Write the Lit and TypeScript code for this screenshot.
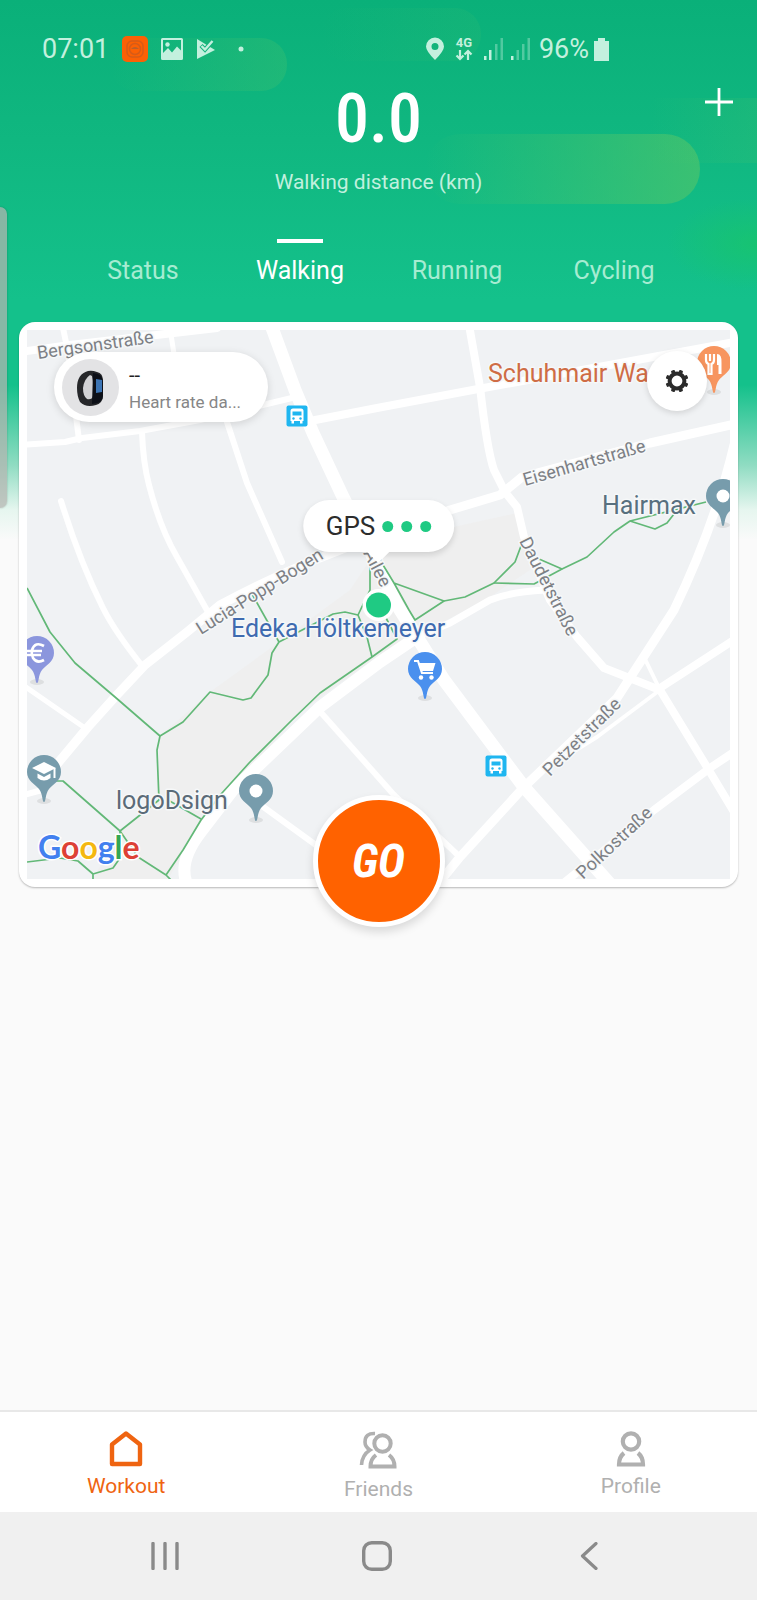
import { LitElement, html, svg, css } from "lit";
import { customElement, state } from "lit/decorators.js";
import { classMap } from "lit/directives/class-map.js";

const TABS = ["Status", "Walking", "Running", "Cycling"];

/* Streets of the map: path and stroke width. */
const ROADS: [string, number][] = [
  ["M20 352 L70 345 L217 328", 8],
  ["M63 328 L68 352 L79 440", 6],
  ["M170 328 L174 354", 5],
  ["M20 445 L65 442 L82 438 L140 431 L200 420 L296 397", 6],
  ["M305 422 L377 408 L478 389 L517 382 L740 341", 8],
  ["M271 325 L295 390 L313 433 L343 497 L377 565 L397 605 L417 637 L444 680 L524 787 L610 884", 13],
  ["M142 432 Q143 462 149 485 Q160 528 177 557 L208 612", 6],
  ["M227 422 L247 483 L282 562", 6],
  ["M61 501 Q80 562 103 608 Q115 632 143 667", 6],
  ["M58 763 L88 727 L115 697 L145 665 L187 632 L220 605 Q300 562 377 537 L450 510 L500 495 L522 477 L650 443 L740 423", 9],
  ["M20 796 L42 790 L60 760", 6],
  ["M20 683 L85 728", 5],
  ["M469 325 L480 387 Q487 450 494 470 L505 492 L517 507 L524 537 L550 600 L577 637 L604 668 L660 690", 8],
  ["M734 445 Q715 525 674 610 L617 698 L524 787 L460 857 L438 884", 9],
  ["M734 640 L660 688", 8],
  ["M660 690 L597 737 L560 760", 4],
  ["M644 657 L660 690", 4],
  ["M660 690 L710 772 L734 812", 8],
  ["M734 752 L710 768 L654 810 L560 886", 8],
  ["M317 708 L394 795 L460 857", 6],
  ["M258 803 L320 848", 6],
  ["M187 884 Q178 862 200 833 L233 790 L320 707 L380 662 L417 637", 12],
  ["M417 637 L450 623 L490 600 Q510 592 545 590", 7],
];

const PATHS = [
  "M27 588 L50 632 L75 663 L115 697 L160 736 L183 722 L210 692 L243 700 L251 698 L268 675 L272 653 L279 642 L333 614 L345 612 L358 615",
  "M252 594 L279 642",
  "M160 736 L157 750 L159 800 L120 831 L63 781 L55 781",
  "M168 800 L201 819",
  "M166 875 L183 850 L201 820 L222 793 L250 762 L292 720 L320 693 L372 657 L397 639 L385 616",
  "M372 657 L367 637 L358 615 L370 590 V560",
  "M120 831 L120 858 L113 868 L93 874 L93 880",
  "M27 862 L60 858 L78 861 L93 874",
  "M120 831 L138 857 L166 875 L172 881",
  "M380 560 L394 583 L409 610 L415 620 L444 601 L394 583",
  "M444 601 L465 597 L494 583 L515 562 L521 546",
  "M494 583 L534 584 L562 569 L539 559",
  "M562 569 L587 557 L614 532 L630 521 L706 502",
  "M630 521 L655 529 L667 523 L674 514",
];

/* Names along the streets: text, start, angle. */
const STREETS: [string, number, number, number][] = [
  ["Bergsonstraße", 38, 359, -8],
  ["Eisenhartstraße", 525, 486, -16],
  ["Lucia-Popp-Bogen", 201, 635, -32],
  ["Daudetstraße", 519, 541, 63],
  ["Petzetstraße", 550, 777, -45],
  ["Polkostraße", 583, 880, -43],
  ["Allee", 363, 553, 63],
];

const PLACES: [string, number, number, string][] = [
  ["Schuhmair Wa", 488, 382, "#cf6c45"],
  ["Hairmax", 602, 514, "#58707f"],
  ["Edeka Höltkemeyer", 231, 637, "#3f6bb0"],
  ["logoDsign", 116, 809, "#5b6b78"],
];

const glyphFood = svg`<path d="M-8 -9 V-3 Q-8 0 -5.500 1 V11 H-2.500 V1 Q0 0 0 -3 V-9 M-4 -9 V-2" fill="none" stroke="#fff" stroke-width="2.200"/><path d="M3 -9 Q8 -9 7.500 0 V11 H4.500 V2 H3 Z" fill="#fff"/>`;
const glyphDot = svg`<circle r="6.500" fill="#fff"/>`;
const glyphEuro = svg`<path d="M7 -7 Q-2 -12 -5 -3 Q-6 1 -4 5 Q0 11 7 7 M-10 -2 H5 M-10 2 H4" fill="none" stroke="#fff" stroke-width="2.600"/>`;
const glyphCap = svg`<path d="M-12 -4 L0 -10 L12 -4 L0 2 Z M-6.500 1.500 L0 5 L6.500 1.500 V6 Q0 11 -6.500 6 Z" fill="#fff"/><path d="M10.500 -4 V6" stroke="#fff" stroke-width="2"/>`;
const glyphCart = svg`<path d="M-11 -8 H-7 L-3 4 H8" fill="none" stroke="#fff" stroke-width="2.200"/><path d="M-7 -6 H10.500 L8 2 H-4 Z" fill="#fff"/><circle cx="-4" cy="8.500" r="2.200" fill="#fff"/><circle cx="6.500" cy="8.500" r="2.200" fill="#fff"/>`;

const PINS: [number, number, string, unknown][] = [
  [714, 363, "#f7955f", glyphFood],
  [723, 496, "#779cac", glyphDot],
  [37, 653, "#8b96dd", glyphEuro],
  [44, 772, "#779cac", glyphCap],
  [256, 791, "#779cac", glyphDot],
  [425, 669, "#4a90ee", glyphCart],
];

const pin = (x: number, y: number, color: string, glyph: unknown) => svg`
  <g transform="translate(${x} ${y})">
    <ellipse cy="29" rx="7" ry="3" fill="#000" opacity=".08"/>
    <path d="M0 30 C-2 30 -1 22 -5 17 C-9 12 -17 9 -17 0 A17 17 0 1 1 17 0 C17 9 9 12 5 17 C1 22 2 30 0 30 Z" fill=${color}/>
    ${glyph}
  </g>`;

const busStop = (x: number, y: number) => svg`
  <g transform="translate(${x} ${y})">
    <rect x="-10.500" y="-10.500" width="21" height="21" rx="2" fill="#1fb6f0"/>
    <path d="M-6.500 -5 Q-6.500 -7.500 -4 -7.500 H4 Q6.500 -7.500 6.500 -5 V5 H5.500 V7.500 H3 V5 H-3 V7.500 H-5.500 V5 H-6.500 Z" fill="#fff"/>
    <path d="M-4.500 -4.500 H4.500 V-.5 H-4.500 Z" fill="#1fb6f0"/>
    <circle cx="-3.500" cy="2.500" r="1.200" fill="#1fb6f0"/><circle cx="3.500" cy="2.500" r="1.200" fill="#1fb6f0"/>
  </g>`;

@customElement("walk-map")
class WalkMap extends LitElement {
  static styles = css`
    :host { display: block; }
    .map { display: block; width: 100%; height: auto; background: #f0f2f4; }
    .road { fill: none; stroke: #fff; stroke-linecap: round; stroke-linejoin: round; }
    .trail { fill: none; stroke: #62b877; stroke-width: 1.7px; stroke-linejoin: round; }
    .label { font-family: Roboto, sans-serif; paint-order: stroke; stroke: #f6f8f9; stroke-width: 3px; stroke-linejoin: round; }
    .street { fill: #7d8085; font-size: 18px; }
    .place { font-size: 25px; }
    .brand { font-family: Lato, sans-serif; font-size: 32px; font-weight: 700; paint-order: stroke; stroke: #fff; stroke-width: 3px; }
    .blue { fill: #4280ef; }
    .red { fill: #dd4136; }
    .yellow { fill: #f4b811; }
    .green { fill: #34a655; }
  `;

  render() {
    return html`
      <svg class="map" viewBox="27 330 703 549" role="img" aria-label="Map of your surroundings">
        <path d="M160 736 L210 692 L279 642 L350 590 L380 545 L440 530 L521 512 L530 570 L490 597 L415 637 L372 660 L300 712 L201 825 L168 879 H93 L120 831 L157 800 Z" fill="#efefef"/>
        ${ROADS.map(([d, w]) => svg`<path class="road" d=${d} stroke-width=${w}/>`)}
        ${PATHS.map((d) => svg`<path class="trail" d=${d}/>`)}
        ${STREETS.map(
          ([name, x, y, a]) =>
            svg`<text class="label street" transform="translate(${x} ${y}) rotate(${a})">${name}</text>`
        )}
        ${PLACES.map(([name, x, y, c]) => svg`<text class="label place" x=${x} y=${y} fill=${c}>${name}</text>`)}
        ${PINS.map(([x, y, c, g]) => pin(x, y, c, g))}
        ${busStop(297, 416)}${busStop(496, 766)}
        <text class="brand" x="38" y="859"><tspan class="blue">G</tspan><tspan class="red">o</tspan><tspan class="yellow">o</tspan><tspan class="blue">g</tspan><tspan class="green">l</tspan><tspan class="red">e</tspan></text>
        <circle cx="378.500" cy="605" r="16" fill="#fff"/>
        <circle cx="378.500" cy="605" r="12.500" fill="#1fca83"/>
      </svg>`;
  }
}

@customElement("app-root")
class AppRoot extends LitElement {
  @state() private tab = "Walking";

  static styles = css`
    :host {
      display: flex;
      flex-direction: column;
      min-height: 100vh;
      position: relative;
      overflow: hidden;
      box-sizing: border-box;
      font-family: Roboto, sans-serif;
      background: linear-gradient(#0ab079 0, #10b780 140px, #14c18b 300px, #14c18b 385px, #8fdcc2 465px, #e6f6ef 510px, #fafafa 540px) #fafafa;
    }
    button { font: inherit; color: inherit; background: none; border: 0; padding: 0; margin: 0; cursor: pointer; }
    svg { display: block; }
    .decor { position: absolute; top: 0; left: 0; width: 100%; height: 330px; }
    .edge { position: absolute; left: 0; top: 207px; width: 7px; height: 301px; border-radius: 0 8px 8px 0; background: #b4b4b0b8; box-shadow: 0 0 2px #0004; }
    header { position: relative; }

    .status { display: flex; justify-content: space-between; align-items: center; height: 72px; padding: 26px 148px 0 42px; box-sizing: border-box; color: #c3f0de; font-size: 27px; line-height: 32px; }
    .cluster { display: flex; align-items: center; }
    .left { gap: 13px; }
    .right { gap: 9px; }
    .power { display: flex; align-items: center; gap: 5px; }

    .summary { display: grid; grid-template-columns: 1fr auto 1fr; color: #fff; }
    .total { grid-column: 2; display: flex; flex-direction: column; align-items: center; }
    .value { font-family: "Liberation Sans Narrow", "Roboto Condensed", Roboto, sans-serif; font-size: 68px; line-height: 94px; font-weight: 500; }
    .caption { font-size: 21px; line-height: 32px; color: #c0f0de; }
    .add { justify-self: end; align-self: start; margin: 16px 24px 0 0; }

    .tabs { display: grid; grid-template-columns: repeat(4, 1fr); width: 83%; margin: 41px auto 0; }
    .tab { display: flex; flex-direction: column; align-items: center; gap: 12px; font-size: 25px; line-height: 32px; color: #a6ecd2; }
    .tab::before { content: ""; width: 46px; height: 4px; }
    .tab.on { color: #fff; }
    .tab.on::before { background: #fff; }

    main { flex: 1; position: relative; padding: 35px 19px 60px; }
    .card { position: relative; padding: 8px; border-radius: 16px; background: #fff; box-shadow: 0 1px 2px #0004; }

    .device { position: absolute; top: 30px; left: 35px; display: flex; align-items: center; gap: 10px; box-sizing: border-box; width: 214px; height: 70px; padding: 0 16px 0 8px; border-radius: 35px; background: #fff; box-shadow: 0 2px 8px #0002; text-align: left; }
    .device .text { display: flex; flex-direction: column; padding-top: 4px; white-space: nowrap; }
    .device .rate { font-size: 20px; line-height: 26px; color: #222; }
    .device .note { font-size: 17px; line-height: 28px; color: #868686; }
    .settings { position: absolute; top: 29px; right: 31px; display: grid; place-items: center; width: 60px; height: 60px; border-radius: 50%; background: #fff; box-shadow: 0 2px 6px #0002; }

    .gps { position: absolute; top: 178px; left: 50%; transform: translateX(-50%); display: flex; align-items: center; gap: 7px; height: 52px; padding: 0 23px; border-radius: 26px; background: #fff; box-shadow: 0 3px 6px #0002; font-size: 26px; color: #2c2c2c; }
    .gps::after { content: ""; position: absolute; top: 51px; left: 50%; margin-left: -12px; border: 12px solid transparent; border-top-color: #fff; border-bottom: 0; }
    .dots { display: flex; gap: 8px; }
    .dot { width: 11px; height: 11px; border-radius: 50%; background: #1fca83; }

    .go { position: absolute; left: 50%; bottom: -40px; transform: translateX(-50%); box-sizing: border-box; width: 132px; height: 132px; border: 5px solid #fff; border-radius: 50%; background: #ff6200; box-shadow: 0 5px 10px #0002; color: #fff; font-family: "Liberation Sans Narrow", "Roboto Condensed", Roboto, sans-serif; font-size: 46px; font-weight: 700; font-style: italic; }

    .nav { display: grid; grid-template-columns: repeat(3, 1fr); height: 102px; border-top: 2px solid #e8e8e8; background: #fff; box-sizing: border-box; }
    .link { display: flex; flex-direction: column; align-items: center; gap: 5px; padding-top: 19px; font-size: 21px; line-height: 28px; color: #b0b0b0; text-decoration: none; }
    .link.on { color: #ef6411; }
    .system { display: grid; grid-template-columns: repeat(3, 212px); justify-content: center; height: 88px; padding-right: 4px; background: #f0f0f0; color: #8a8a8a; }
    .system button { display: grid; place-items: center; }
  `;

  private renderStatus() {
    return html`
      <div class="status">
        <div class="cluster left">
          <span>07:01</span>
          <svg width="26" height="26" viewBox="0 0 26 26"><rect width="26" height="26" rx="5" fill="#fb6105"/><g fill="none" stroke="#d65c18" stroke-width="1.500"><rect x="5" y="5" width="16" height="16" rx="5"/><circle cx="13" cy="13" r="5.500"/></g><path d="M9 13 Q13 9 17 13 Z" fill="#b8602c"/></svg>
          <svg width="22" height="22" viewBox="0 0 22 22"><path fill="currentColor" fill-rule="evenodd" d="M0 1.500 Q0 0 1.500 0 H20.500 Q22 0 22 1.500 V20.500 Q22 22 20.500 22 H1.500 Q0 22 0 20.500 Z M2 2 V15 L7 10 L11 14.500 L16 8.500 L20 12.500 V2 Z"/><circle cx="6.500" cy="6.500" r="2.200" fill="currentColor"/></svg>
          <svg width="20" height="22" viewBox="0 0 20 22"><path d="M1 1 L19 12 L1 21 Z" fill="currentColor"/><path d="M5 7.500 L9 11.500 L17.500 2" fill="none" stroke="#14b37c" stroke-width="4.400"/><path d="M5.500 8 L9 11.500 L16.500 3" fill="none" stroke="currentColor" stroke-width="2.400"/></svg>
          <svg width="30" height="6" viewBox="0 0 30 6"><circle cx="12" cy="3" r="2.500" fill="currentColor"/></svg>
        </div>
        <div class="cluster right">
          <svg width="20" height="24" viewBox="0 0 20 24"><path fill="currentColor" fill-rule="evenodd" d="M10 23 Q1 14 1 9.500 A9 9 0 0 1 19 9.500 Q19 14 10 23 Z M10 6 A3.500 3.500 0 1 0 10 13 A3.500 3.500 0 1 0 10 6 Z"/></svg>
          <svg width="20" height="32" viewBox="0 -4 20 32"><text x="10" y="10" text-anchor="middle" font-size="13" font-weight="700" fill="currentColor">4G</text><path d="M6 13 V22 M2.500 18.500 L6 22 L9.500 18.500 M14 23 V14 M10.500 17.500 L14 14 L17.500 17.500" fill="none" stroke="currentColor" stroke-width="2.200"/></svg>
          <svg width="47" height="22" viewBox="0 0 47 22"><g fill="currentColor"><path d="M1 18h2.500v4H1z M6 12h2.500v10H6z M28 18h2.500v4H28z"/><path opacity=".38" d="M12 6h2.500v16H12z M17.500 0h2.500v22h-2.500z M33.500 12h2.500v10h-2.500z M39 6h2.500v16H39z M44.500 0H47v22h-2.500z"/></g></svg>
          <span class="power">96%<svg width="15" height="23" viewBox="0 0 15 23"><path d="M4 0 H11 V3 H15 V23 H0 V3 H4 Z" fill="currentColor"/></svg></span>
        </div>
      </div>`;
  }

  private renderDevice() {
    return html`
      <button class="device">
        <svg width="57" height="57" viewBox="0 0 57 57">
          <circle cx="28.500" cy="28.500" r="28.500" fill="#e3e3e5"/>
          <path d="M26 12 Q15 15 15 29 Q15 37 18 43 Q24 49 34 46 Q41 44 41 36 V22 Q41 14 35 13 Q30 11 26 12 Z" fill="#26272a"/>
          <path d="M28 16 Q22 20 21 29 Q21 37 25 40 Q30 41 31 37 Q32 25 30 17 Z" fill="#d2d2d5"/>
          <path d="M31 14 Q41 14 41 24 V37 Q41 44 30 45 Z" fill="#0d1018"/>
          <path d="M34 20 L40 21 V33 L34 34 Z" fill="#3c74b4"/>
        </svg>
        <span class="text"><span class="rate">--</span><span class="note">Heart rate da...</span></span>
      </button>`;
  }

  render() {
    return html`
      <svg class="decor" viewBox="0 0 757 330" preserveAspectRatio="none" aria-hidden="true">
        <defs>
          <linearGradient id="a"><stop offset="0" stop-color="#4cc46c" stop-opacity="0"/><stop offset="1" stop-color="#4cc46c" stop-opacity=".7"/></linearGradient>
          <radialGradient id="b"><stop offset="0" stop-color="#1ac764" stop-opacity=".6"/><stop offset="1" stop-color="#1ac764" stop-opacity="0"/></radialGradient>
        </defs>
        <rect x="425" y="134" width="275" height="70" rx="35" fill="url(#a)"/>
        <rect x="110" y="38" width="177" height="53" rx="26" fill="url(#a)" opacity=".4"/>
        <rect x="320" y="8" width="161" height="53" rx="26" fill="url(#a)" opacity=".18"/>
        <rect x="650" y="98" width="200" height="65" fill="url(#a)" opacity=".5"/>
        <ellipse cx="757" cy="244" rx="90" ry="46" fill="url(#b)"/>
      </svg>
      <header>
        ${this.renderStatus()}
        <div class="summary">
          <div class="total"><span class="value">0.0</span><span class="caption">Walking distance (km)</span></div>
          <button class="add" aria-label="Add"><svg width="28" height="28" viewBox="0 0 28 28"><path d="M14 0 V28 M0 14 H28" stroke="#fff" stroke-width="2.800"/></svg></button>
        </div>
        <nav class="tabs">
          ${TABS.map(
            (t) => html`<button class=${classMap({ tab: true, on: t === this.tab })} @click=${() => (this.tab = t)}>${t}</button>`
          )}
        </nav>
      </header>
      <main>
        <section class="card">
          <walk-map></walk-map>
          ${this.renderDevice()}
          <button class="settings" aria-label="Settings">
            <svg width="24" height="24" viewBox="-12 -12 24 24">
              <circle r="7.400" fill="none" stroke="#2b2b2b" stroke-width="4"/>
              ${[22.5, 67.5, 112.5, 157.5, 202.5, 247.5, 292.5, 337.5].map((a) => svg`<rect x="-2" y="-11.500" width="4" height="4" rx="1" fill="#2b2b2b" transform="rotate(${a})"/>`)}
            </svg>
          </button>
          <div class="gps">GPS<span class="dots"><span class="dot"></span><span class="dot"></span><span class="dot"></span></span></div>
          <button class="go">GO</button>
        </section>
      </main>
      <nav class="nav">
        <a class="link on" href="#workout">
          <svg width="34" height="36" viewBox="0 0 34 36"><path d="M3 33 V13.500 L17 2.500 L31 13.500 V33 Z" fill="none" stroke="currentColor" stroke-width="4.400" stroke-linejoin="round"/></svg>
          Workout
        </a>
        <a class="link" href="#friends">
          <svg width="38" height="39" viewBox="0 0 38 39"><g fill="none" stroke="currentColor" stroke-width="4"><circle cx="23.500" cy="12.500" r="8.200"/><path d="M17 24 Q11.500 28 11.500 35.500 H35.500 Q35.500 28 30 24"/><path d="M16 2.500 Q6 2 6 11 Q6 16 11 19 Q3 24 2.500 34" stroke-width="3.600"/></g></svg>
          Friends
        </a>
        <a class="link" href="#profile">
          <svg width="30" height="36" viewBox="0 0 30 36"><g fill="none" stroke="currentColor" stroke-width="4.200"><circle cx="15" cy="10.500" r="8.200"/><path d="M8 22 Q3 26 3 33.500 H27 Q27 26 22 22"/></g></svg>
          Profile
        </a>
      </nav>
      <div class="system">
        <button aria-label="Recent apps"><svg width="28" height="28" viewBox="0 0 28 28"><path d="M2 1.500 V26.500 M14 1.500 V26.500 M26 1.500 V26.500" stroke="currentColor" stroke-width="3.400" stroke-linecap="round"/></svg></button>
        <button aria-label="Home"><svg width="30" height="30" viewBox="0 0 30 30"><rect x="1.700" y="1.700" width="26.600" height="26.600" rx="8" fill="none" stroke="currentColor" stroke-width="3.400"/></svg></button>
        <button aria-label="Back"><svg width="18" height="28" viewBox="0 0 18 28"><path d="M16 1.500 L2.500 14 L16 26.500" fill="none" stroke="currentColor" stroke-width="3.200" stroke-linecap="round" stroke-linejoin="round"/></svg></button>
      </div>
      <div class="edge"></div>`;
  }
}
